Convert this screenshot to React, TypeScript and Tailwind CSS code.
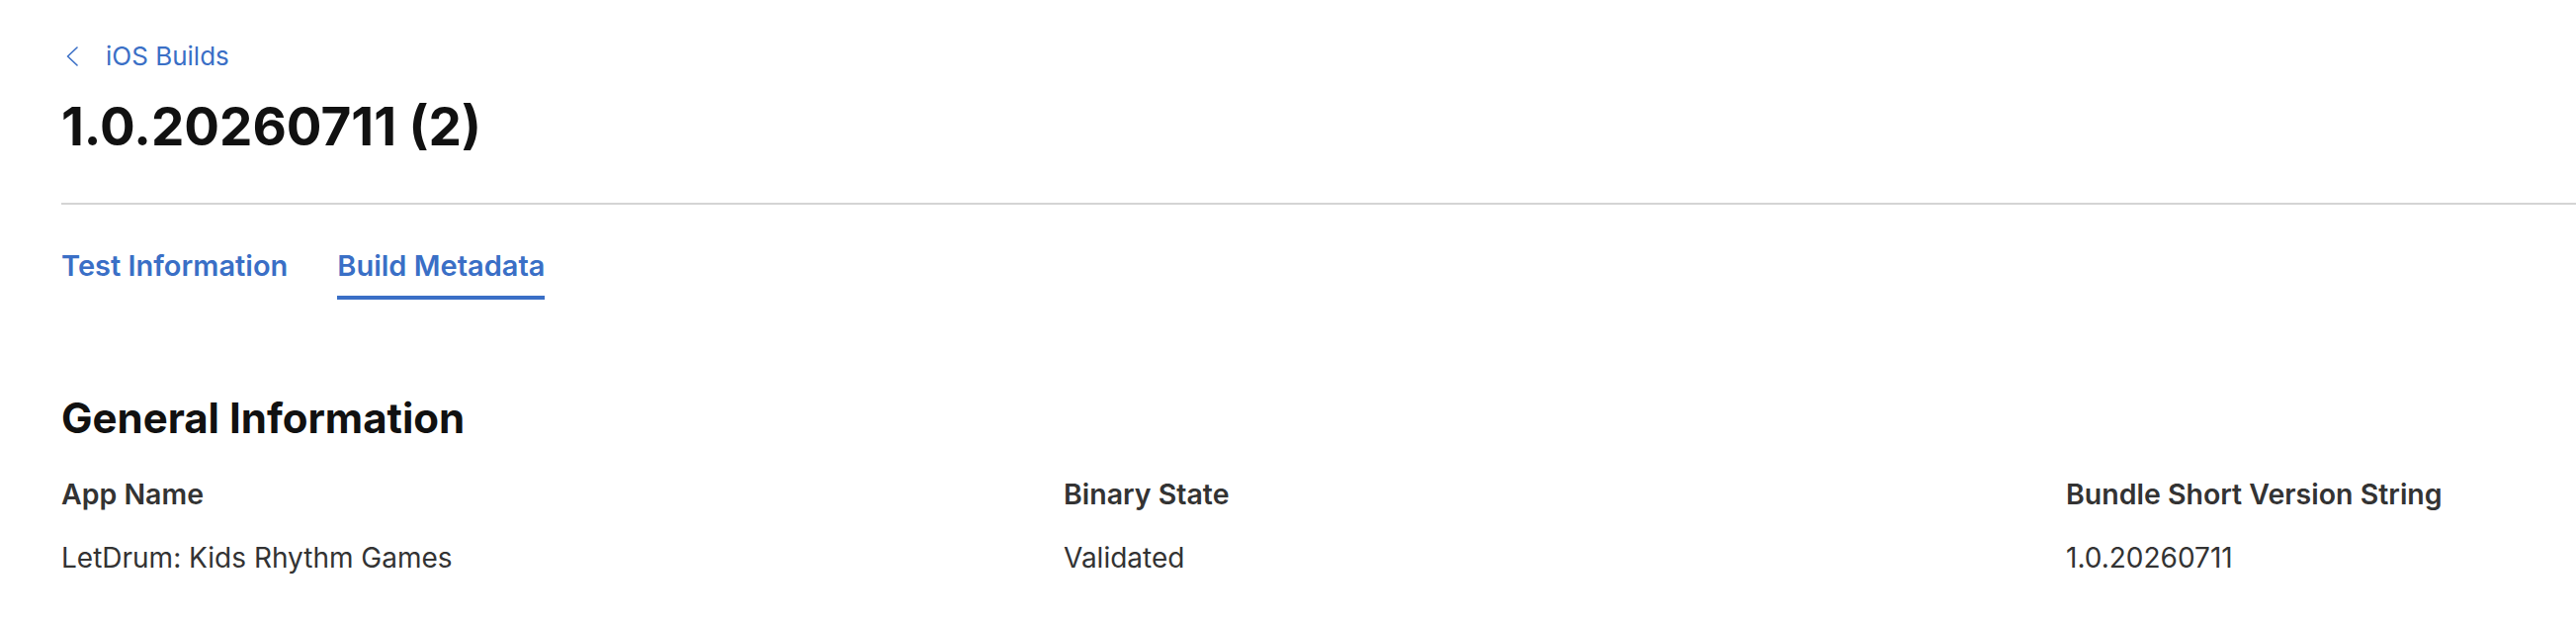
const fields = [
  { label: 'App Name', value: 'LetDrum: Kids Rhythm Games' },
  { label: 'Binary State', value: 'Validated' },
  { label: 'Bundle Short Version String', value: '1.0.20260711' },
];

export default function App() {
  return (
    <div className="min-h-[630px] w-full overflow-hidden bg-white pl-[62px] font-['Inter','Liberation_Sans',sans-serif] antialiased">
      {/* breadcrumb */}
      <a href="#" className="mt-[41px] flex h-[32px] items-center text-[26px] leading-[32px] text-[#3a6fc6]">
        <svg width="14" height="20" viewBox="0 0 14 20" className="ml-[4px] mr-[27px]" fill="none">
          <path d="M12 1 L2.5 10 L12 19" stroke="#3a6fc6" strokeWidth="1.6" strokeLinecap="round" strokeLinejoin="round" />
        </svg>
        <span>iOS Builds</span>
      </a>

      <h1 className="mt-[25px] text-[53px] font-bold leading-[60px] text-[#111111]">1.0.20260711 (2)</h1>

      <div className="mt-[47px] h-[2px] bg-[#d4d4d4]" />

      {/* tabs */}
      <nav className="mt-[44px] flex gap-[50px] text-[29px] font-semibold leading-[36px] text-[#3a6fc6]">
        <button className="pb-[16px]">Test Information</button>
        <button className="border-b-4 border-[#3a6fc6] pb-[12px]">Build Metadata</button>
      </nav>

      <section className="mt-[94px]">
        <h2 className="text-[42px] font-bold leading-[52px] text-[#111111]">General Information</h2>
        <div className="mt-[33px] grid w-[3042px] grid-cols-3">
          {fields.map((f) => (
            <div key={f.label}>
              <div className="text-[28.5px] font-semibold leading-[36px] text-[#333333]">{f.label}</div>
              <div className="mt-[28px] text-[28px] leading-[36px] text-[#333333]">{f.value}</div>
            </div>
          ))}
        </div>
      </section>
    </div>
  );
}
